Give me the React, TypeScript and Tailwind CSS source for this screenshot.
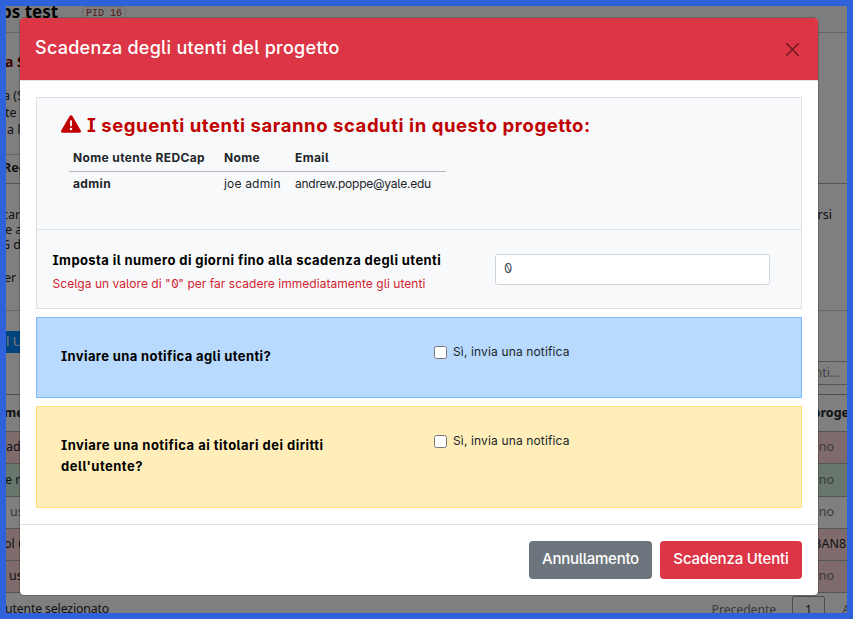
import React from "react";

const rowsData = [
  { left: "ad", pad: "pl-0", right: "ino", tone: "h-8 bg-[#ffd6d8]", ink: "text-[#212529]", rink: "text-[#70757a]" },
  { left: "e n", pad: "-ml-[1px]", right: "ino", tone: "h-[33px] bg-[#d1ecd8]", ink: "text-[#212529]", rink: "text-[#70757a]" },
  { left: "us", pad: "pl-[4px]", right: "ino", tone: "h-8 bg-white", ink: "text-[#70757a]", rink: "text-[#70757a]" },
  { left: "ol u", pad: "-ml-[2px]", right: "3AN8E", tone: "h-8 bg-[#ffd6d8]", ink: "text-[#212529]", rink: "text-[#212529]" },
  { left: "us", pad: "pl-[3px]", right: "ino", tone: "h-8 bg-[#ffd6d8]", ink: "text-[#212529]", rink: "text-[#70757a]" },
];

function Page() {
  return (
    <div className="flex h-full w-full flex-col overflow-hidden bg-white font-['Noto_Sans',sans-serif] text-[12.5px] leading-[15px] text-[#212529]">
      <header className="flex h-[27px] shrink-0 items-start overflow-hidden border-b border-[#ccc] bg-[#fafafa]">
        <span className="-ml-[5px] -mt-[4px] w-[81px] text-[17px] font-bold leading-[19px] text-black">ps test</span>
        <span className="h-[17px] rounded border border-[#ddd] px-[3px] text-[10px] leading-[14px] text-[#a33] font-['Liberation_Mono',monospace]">PID 16</span>
      </header>
      <div className="h-[121px] shrink-0 pt-[21px]">
        <p className="-ml-[1px] text-[14px] font-bold text-[#800000]">a S</p>
        <p className="mt-[18px] -ml-[3px] leading-[17px]">a (S</p>
        <p className="-ml-[1px] leading-[17px]">te</p>
        <p className="pl-[1px] leading-[17px]">a l</p>
      </div>
      <div className="h-[30px] shrink-0 border-b border-[#aaa]">
        <div className="-ml-[3px] flex h-full w-40 items-center border-t border-[#ccc] pb-[3px] font-bold">Reg</div>
      </div>
      <div className="flex h-[127px] shrink-0 justify-between border-b border-[#ccc] pt-[23px]">
        <div>
          <p className="-ml-[4px]">car</p>
          <p className="-ml-[1px]">e a</p>
          <p className="-ml-[5px]">G d</p>
          <p className="mt-[18px] -ml-[2px]">er (</p>
        </div>
        <p className="pr-[15px]">rsi</p>
      </div>
      <div className="flex h-[84px] shrink-0 justify-between border-b border-[#999] pt-5">
        <div className="h-[22px] w-60 bg-[#0088ff] text-[13px] leading-[20px] text-[#eee]">l U</div>
        <div className="mt-[30px] h-6 w-36 border border-r-0 border-[#aaa] pr-[7px] text-right leading-[21px] text-[#888]">nti...</div>
      </div>
      <div className="-ml-[2px] flex h-[37px] shrink-0 items-center justify-between border-b border-[#aaa] pb-[2px] font-bold">
        <span>me</span>
        <span className="-mr-[2px]">proge</span>
      </div>
      {rowsData.map((r, i) => (
        <div key={i} className={`flex shrink-0 items-center justify-between border-b border-[#aaa] pb-[2px] ${r.tone}`}>
          <span className={`${r.pad} ${r.ink}`}>{r.left}</span>
          <span className={`${r.rink} ${r.right === "ino" ? "pr-[13px]" : "-mr-[6px]"}`}>{r.right}</span>
        </div>
      ))}
      <footer className="flex h-6 shrink-0 justify-between overflow-hidden text-[12.300px]">
        <span className="-ml-[1px] pt-[8px] tracking-[-0.15px]">utente selezionato</span>
        <div className="flex">
          <span className="pt-[9px] tracking-[-0.1px] text-[#70757a]">Precedente</span>
          <span className="ml-4 mt-[3px] h-8 w-[33px] rounded-[2px] border border-[#989898] pt-[5px] text-center">1</span>
          <span className="-mr-[3px] ml-[17px] pt-[9px] text-[#70757a]">A</span>
        </div>
      </footer>
    </div>
  );
}

function Zero() {
  return <span className="inline-block -scale-x-100 slashed-zero">0</span>;
}

function Check({ id }: { id: string }) {
  return (
    <label htmlFor={id} className="flex items-center gap-[6px] text-[12px] leading-5 text-[#212529]">
      <input id={id} type="checkbox" className="h-[13px] w-[13px]" />
      <span className="tracking-[0.140px]">Sì, invia una notifica</span>
    </label>
  );
}

function Modal() {
  return (
    <div className="flex h-[579px] w-[800px] flex-col overflow-hidden rounded-[5px] border border-black/20 bg-white bg-clip-padding font-['Inter',sans-serif] text-[#212529] [font-feature-settings:'cv05','cv08']">
      <header className="flex h-[63px] shrink-0 items-center justify-between border-b border-[#dee2e6] bg-[#dc3545] pl-[15px] pr-[19px]">
        <h5 className="pb-[2px] text-[18px] font-medium leading-6 tracking-[0.270px] text-white">Scadenza degli utenti del progetto</h5>
        <svg className="h-[13px] w-[13px]" viewBox="0 0 13 13" fill="none" stroke="#6e1b23" strokeWidth="1.6" strokeLinecap="round">
          <path d="M.8.8l11.4 11.4M12.2.8L.8 12.2" />
        </svg>
      </header>
      <main className="flex grow flex-col gap-2 px-4 pt-4">
        <section className="h-[212px] border border-[#dee2e6] bg-[#f8f9fa]">
          <div className="h-[132px] border-b border-[#dee2e6] pl-6 pt-4">
            <h4 className="flex h-6 items-center gap-[6px] text-[18.500px] font-bold tracking-[0.570px] text-[#c00000]">
              <svg className="mb-[4px] h-5 w-5" viewBox="0 0 512 512" fill="currentColor">
                <path d="M256 32c14.200 0 27.300 7.500 34.500 19.800l216 368c7.300 12.400 7.300 27.700.2 40.100S486.300 480 472 480H40c-14.300 0-27.600-7.700-34.700-20.100s-7-27.800.2-40.100l216-368C228.700 39.500 241.800 32 256 32zm0 128c-13.300 0-24 10.700-24 24v112c0 13.300 10.700 24 24 24s24-10.700 24-24V184c0-13.300-10.700-24-24-24zm32 224a32 32 0 1 0-64 0 32 32 0 1 0 64 0z" />
              </svg>
              <span>I seguenti utenti saranno scaduti in questo progetto:</span>
            </h4>
            <table className="ml-2 mt-[7px] w-[377px] table-fixed text-left text-[12px] leading-[18px]">
              <thead>
                <tr className="h-[26px] border-b border-[#b5b7ba] tracking-[0.370px]">
                  <th className="w-[151px] pl-1">Nome utente REDCap</th>
                  <th className="w-[71px] pl-1">Nome</th>
                  <th className="pl-1">Email</th>
                </tr>
              </thead>
              <tbody>
                <tr className="h-[25px]">
                  <td className="pl-1 font-bold tracking-[0.350px]">admin</td>
                  <td className="pl-1 tracking-[0.180px]">joe admin</td>
                  <td className="pl-1 tracking-[-0.240px]">andrew.poppe@yale.edu</td>
                </tr>
              </tbody>
            </table>
          </div>
          <div className="flex justify-between pl-[15.500px] pr-[31px] pt-5">
            <div>
              <p className="text-[13px] font-bold leading-[21px] tracking-[0.410px] text-black">Imposta il numero di giorni fino alla scadenza degli utenti</p>
              <p className="mt-[3px] text-[12px] leading-[19px] tracking-[0.040px] text-[#d2232f]">Scelga un valore di "<Zero />" per far scadere immediatamente gli utenti</p>
            </div>
            <div className="mt-1 h-[31px] w-[275px] rounded-[3px] border border-[#ced4da] bg-white pl-2 text-[13px] leading-[27px] text-[#495057]">
              <Zero />
            </div>
          </div>
        </section>
        <section className="flex h-[81px] border border-[#7abaff] bg-[#b8daff] pl-6 pt-6">
          <p className="w-[373px] pt-1 text-[13px] font-bold leading-[21px] tracking-[0.380px] text-black">Inviare una notifica agli utenti?</p>
          <div><Check id="notify-users" /></div>
        </section>
        <section className="flex h-[102px] border border-[#ffdf7e] bg-[#ffeeba] pl-6 pt-6">
          <p className="w-[373px] pr-20 pt-1 text-[13px] font-bold leading-[21px] tracking-[0.480px] text-black">Inviare una notifica ai titolari dei diritti dell'utente?</p>
          <div><Check id="notify-holders" /></div>
        </section>
      </main>
      <footer className="flex h-[71px] shrink-0 justify-end gap-2 border-t border-[#dee2e6] pr-4 pt-4 text-[15px] font-medium leading-[36px] text-white">
        <button className="h-[38px] w-[123px] rounded-[4px] bg-[#6c757d] pb-[2px] tracking-[-0.270px]">Annullamento</button>
        <button className="h-[38px] w-[142px] rounded-[4px] bg-[#dc3545] pb-[2px] tracking-[-0.170px]">Scadenza Utenti</button>
      </footer>
    </div>
  );
}

export default function App() {
  return (
    <div className="relative h-[619px] w-[853px] overflow-hidden border-[6px] border-[#2f62da]">
      <Page />
      <div className="absolute inset-0 bg-black/50 pl-[13px] pt-[11px]">
        <Modal />
      </div>
    </div>
  );
}
